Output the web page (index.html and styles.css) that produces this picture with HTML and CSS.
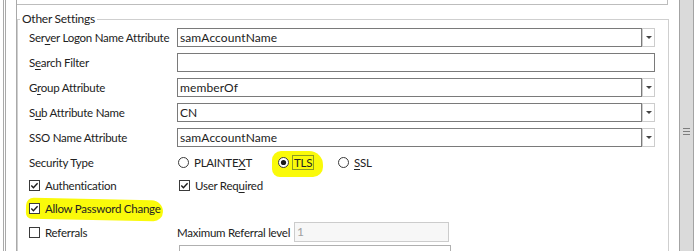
FILE: index.html
```html
<!DOCTYPE html>
<html lang="en">

<head>
  <meta charset="UTF-8">
  <meta name="viewport" content="width=device-width, initial-scale=1.0">
  <title>Other Settings</title>
  <link rel="stylesheet" href="styles.css">
</head>

<body>
  <div class="frame">
    <div class="edge"></div>
    <div class="panel">
      <div class="topBox"></div>
      <fieldset class="group">
        <legend>Other Settings</legend>
        <div class="rows">
          <div class="row">
            <span class="lbl">Ser<u>v</u>er Logon Name Attribute</span>
            <div class="combo">
              <div class="field">samAccountName</div>
              <div class="drop"></div>
            </div>
          </div>
          <div class="row">
            <span class="lbl">S<u>e</u>arch Filter</span>
            <div class="field"></div>
          </div>
          <div class="row">
            <span class="lbl">G<u>r</u>oup Attribute</span>
            <div class="combo">
              <div class="field">memberOf</div>
              <div class="drop"></div>
            </div>
          </div>
          <div class="row">
            <span class="lbl">S<u>u</u>b Attribute Name</span>
            <div class="combo">
              <div class="field">CN</div>
              <div class="drop"></div>
            </div>
          </div>
          <div class="row">
            <span class="lbl">SSO Name Attribute</span>
            <div class="combo">
              <div class="field">samAccountName</div>
              <div class="drop"></div>
            </div>
          </div>

          <div class="row opt">
            <span class="lbl">Security Type</span>
            <div class="radios">
              <span class="choice">
                <svg class="radio" width="11" height="11" viewBox="0 0 11 11"><circle cx="5.5" cy="5.5" r="5" fill="#fff" stroke="#3a3a3a"/></svg>
                <span>PLAINTE<u>X</u>T</span>
              </span>
              <span class="choice marked">
                <svg class="radio" width="11" height="11" viewBox="0 0 11 11"><circle cx="5.5" cy="5.5" r="5" fill="#fff" stroke="#3a3a3a"/><circle cx="5.5" cy="5.5" r="2.6" fill="#1a1a1a"/></svg>
                <span class="focus"><u>T</u>LS</span>
              </span>
              <span class="choice">
                <svg class="radio" width="11" height="11" viewBox="0 0 11 11"><circle cx="5.5" cy="5.5" r="5" fill="#fff" stroke="#3a3a3a"/></svg>
                <span><u>S</u>SL</span>
              </span>
            </div>
          </div>

          <div class="row opt">
            <span class="check">
              <svg class="box" width="11" height="11" viewBox="0 0 11 11"><rect x="0.5" y="0.5" width="10" height="10" fill="#fff" stroke="#3a3a3a"/><path d="M2.3 5.6 L4.4 7.7 L8.6 3.2" fill="none" stroke="#1a1a1a" stroke-width="1.4"/></svg>
              <span>Authentication</span>
            </span>
            <span class="check right">
              <svg class="box" width="11" height="11" viewBox="0 0 11 11"><rect x="0.5" y="0.5" width="10" height="10" fill="#fff" stroke="#3a3a3a"/><path d="M2.3 5.6 L4.4 7.7 L8.6 3.2" fill="none" stroke="#1a1a1a" stroke-width="1.4"/></svg>
              <span>User Req<u>u</u>ired</span>
            </span>
          </div>

          <div class="row opt">
            <span class="check marked">
              <svg class="box" width="11" height="11" viewBox="0 0 11 11"><rect x="0.5" y="0.5" width="10" height="10" fill="#fff" stroke="#3a3a3a"/><path d="M2.3 5.6 L4.4 7.7 L8.6 3.2" fill="none" stroke="#1a1a1a" stroke-width="1.4"/></svg>
              <span>Allow Password Change</span>
            </span>
          </div>

          <div class="row opt">
            <span class="check">
              <svg class="box" width="11" height="11" viewBox="0 0 11 11"><rect x="0.5" y="0.5" width="10" height="10" fill="#fff" stroke="#3a3a3a"/></svg>
              <span>Referrals</span>
            </span>
            <div class="level">
              <span>Maximum Referral level</span>
              <div class="field off">1</div>
            </div>
          </div>

          <div class="lowerBox"></div>
        </div>
      </fieldset>
    </div>
    <div class="scroll">
      <span class="grip"></span>
    </div>
  </div>
</body>

</html>
```

FILE: styles.css
```css
body {
  margin: 0;
  background-color: #fff;
  font-family: Lato, "Noto Sans", sans-serif;
  font-size: 11.5px;
  letter-spacing: -0.25px;
  color: #222;
  overflow: hidden;
}

u {
  text-underline-offset: 2px;
}

.frame {
  display: flex;
  width: 698px;
  height: 251px;
  overflow: hidden;
}

.edge {
  width: 3px;
  box-sizing: border-box;
  border-left: 1px solid #a9a9a9;
  border-right: 1px solid #a9a9a9;
  margin-left: 3px;
  margin-right: 10px;
}

.panel {
  width: 653px;
  box-sizing: border-box;
  border-left: 1px solid #a9a9a9;
}

.topBox {
  width: 651px;
  height: 5px;
  box-sizing: border-box;
  border-right: 1px solid #bdbdbd;
  border-bottom: 1px solid #bdbdbd;
}

.group {
  margin: 6px 0 0 0;
  padding: 0;
  border: 1px solid #cfcfcf;
  min-width: 0;
}

.group>legend {
  margin-left: 2px;
  padding: 0 2px;
  line-height: 16px;
  font-size: 12px;
}

.rows {
  padding: 1px 13px 0 11px;
}

.row {
  display: grid;
  grid-template-columns: 148px 1fr;
  align-items: center;
  height: 19px;
  margin-bottom: 6px;
}

.row.opt {
  height: 19px;
  margin-bottom: 4px;
}

.lbl {
  white-space: nowrap;
}

.field {
  height: 19px;
  box-sizing: border-box;
  border: 1px solid #7a7a7a;
  padding: 0 2px;
  line-height: 17px;
  font-size: 12px;
  letter-spacing: 0.1px;
  white-space: nowrap;
}

.combo {
  display: flex;
}

.combo>.field {
  flex: 1;
}

.drop {
  width: 13px;
  height: 19px;
  box-sizing: border-box;
  border: 1px solid #cdcdcd;
  display: flex;
  align-items: center;
  justify-content: center;
}

.drop::after {
  content: "";
  border-left: 3px solid transparent;
  border-right: 3px solid transparent;
  border-top: 3px solid #444;
}

.radios {
  display: grid;
  grid-template-columns: 100px 60px auto;
  margin-left: 1px;
}

.choice,
.check {
  display: flex;
  align-items: center;
  gap: 5px;
  white-space: nowrap;
}

.check.right {
  margin-left: 2px;
}

.radio,
.box {
  flex: none;
}

.choice.marked {
  position: relative;
}

.choice.marked::before {
  content: "";
  position: absolute;
  left: -6px;
  top: -5px;
  width: 51px;
  height: 26px;
  background-color: #fafa0a;
  border-radius: 9px 14px 10px 8px;
  z-index: -1;
}

.focus {
  outline: 1px solid #8c9c22;
  padding: 0 1px;
  margin-left: -1px;
}

.check.marked {
  position: relative;
}

.check.marked::before {
  content: "";
  position: absolute;
  left: -3px;
  top: -3px;
  width: 137px;
  height: 21px;
  background-color: #fafa0a;
  border-radius: 8px 12px 10px 6px;
  transform: rotate(1.2deg);
  z-index: -1;
}

.level {
  display: grid;
  grid-template-columns: 117px 155px;
  align-items: center;
  white-space: nowrap;
}

.field.off {
  height: 20px;
  border-color: #cccccc;
  background-color: #f7f7f7;
  color: #a0a0a0;
}

.lowerBox {
  margin: 1px 0 0 150px;
  width: 270px;
  height: 30px;
  border: 1px solid #b0b0b0;
}

.scroll {
  width: 15px;
  box-sizing: border-box;
  margin-left: 10px;
  border-left: 1px solid #a3a3a3;
  border-right: 1px solid #a3a3a3;
  background-color: #dadada;
  display: flex;
  justify-content: center;
  padding-top: 128px;
}

.grip {
  width: 7px;
  height: 7px;
  box-sizing: border-box;
  border-top: 1px solid #7d7d7d;
  border-bottom: 1px solid #7d7d7d;
  background: linear-gradient(#7d7d7d, #7d7d7d) center / 100% 1px no-repeat;
}
```
